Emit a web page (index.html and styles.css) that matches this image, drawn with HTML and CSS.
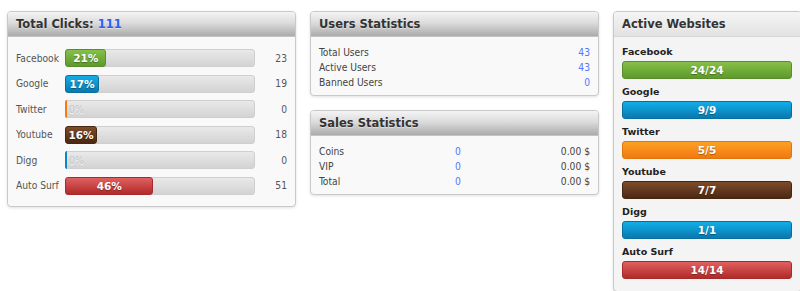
FILE: index.html
```html
<!DOCTYPE html>
<html lang="en">
<head>
    <meta charset="UTF-8">
    <title>Dashboard</title>
    <link rel="stylesheet" href="styles.css">
</head>
<body>
    <div class="dashboard">
        <div class="col col-clicks">
            <div class="box">
                <div class="box-head">Total Clicks: <span class="total">111</span></div>
                <div class="box-body clicks">
                    <div class="click-row">
                        <span class="name">Facebook</span>
                        <div class="track"><div class="fill green" style="width: 21%">21%</div></div>
                        <span class="count">23</span>
                    </div>
                    <div class="click-row">
                        <span class="name">Google</span>
                        <div class="track"><div class="fill blue" style="width: 17%">17%</div></div>
                        <span class="count">19</span>
                    </div>
                    <div class="click-row">
                        <span class="name">Twitter</span>
                        <div class="track"><div class="fill orange empty">0%</div></div>
                        <span class="count">0</span>
                    </div>
                    <div class="click-row">
                        <span class="name">Youtube</span>
                        <div class="track"><div class="fill brown" style="width: 16%">16%</div></div>
                        <span class="count">18</span>
                    </div>
                    <div class="click-row">
                        <span class="name">Digg</span>
                        <div class="track"><div class="fill blue empty">0%</div></div>
                        <span class="count">0</span>
                    </div>
                    <div class="click-row">
                        <span class="name">Auto Surf</span>
                        <div class="track"><div class="fill red" style="width: 46%">46%</div></div>
                        <span class="count">51</span>
                    </div>
                </div>
            </div>
        </div>

        <div class="col col-stats">
            <div class="box">
                <div class="box-head">Users Statistics</div>
                <div class="box-body stats">
                    <div class="stat-row"><span>Total Users</span><span class="val">43</span></div>
                    <div class="stat-row"><span>Active Users</span><span class="val">43</span></div>
                    <div class="stat-row"><span>Banned Users</span><span class="val">0</span></div>
                </div>
            </div>
            <div class="box">
                <div class="box-head">Sales Statistics</div>
                <div class="box-body stats">
                    <div class="sale-row"><span>Coins</span><span class="val">0</span><span class="money">0.00 $</span></div>
                    <div class="sale-row"><span>VIP</span><span class="val">0</span><span class="money">0.00 $</span></div>
                    <div class="sale-row"><span>Total</span><span class="val">0</span><span class="money">0.00 $</span></div>
                </div>
            </div>
        </div>

        <div class="col col-sites">
            <div class="box box-light">
                <div class="box-head">Active Websites</div>
                <div class="box-body sites">
                    <div class="site">
                        <div class="site-name">Facebook</div>
                        <div class="site-bar green">24/24</div>
                    </div>
                    <div class="site">
                        <div class="site-name">Google</div>
                        <div class="site-bar blue">9/9</div>
                    </div>
                    <div class="site">
                        <div class="site-name">Twitter</div>
                        <div class="site-bar orange">5/5</div>
                    </div>
                    <div class="site">
                        <div class="site-name">Youtube</div>
                        <div class="site-bar brown">7/7</div>
                    </div>
                    <div class="site">
                        <div class="site-name">Digg</div>
                        <div class="site-bar blue">1/1</div>
                    </div>
                    <div class="site">
                        <div class="site-name">Auto Surf</div>
                        <div class="site-bar red">14/14</div>
                    </div>
                </div>
            </div>
        </div>
    </div>
</body>
</html>
```

FILE: styles.css
```css
body {
    margin: 0;
    padding: 0;
    background: #ffffff;
    font-family: 'DejaVu Sans Condensed', 'DejaVu Sans', Verdana, sans-serif;
    font-size: 10.2px;
    color: #444;
    overflow: hidden;
}
.dashboard {
    display: flex;
    align-items: flex-start;
    gap: 14px;
    padding: 11px 0 0 7px;
    width: 820px;
}
.col {
    display: flex;
    flex-direction: column;
    gap: 14px;
    flex: none;
}
.col-clicks,
.col-stats {
    width: 289px;
}
.col-sites {
    width: 189px;
}
.box {
    background: #f9f9f9;
    border: 1px solid #c9c9c9;
    border-radius: 4px;
    box-shadow: 0 1px 3px rgba(0, 0, 0, 0.12);
    overflow: hidden;
}
.box-head {
    height: 24px;
    line-height: 24px;
    padding: 0 8px;
    font-family: 'DejaVu Sans', Verdana, sans-serif;
    font-size: 11.5px;
    font-weight: bold;
    color: #333;
    background: linear-gradient(to bottom, #f4f4f4 0%, #dcdcdc 45%, #ababab 100%);
    border-bottom: 1px solid #c4c4c4;
    text-shadow: 0 1px 0 rgba(255, 255, 255, 0.4);
}
.box-head .total {
    color: #2d5ff5;
}
.box-light {
    background: #f4f4f4;
}
.box-light .box-head {
    background: linear-gradient(to bottom, #f5f5f5 0%, #e2e2e2 100%);
    border-bottom: 1px solid #d6d6d6;
}

/* total clicks */
.clicks {
    padding: 12px 8px 11px 8px;
    display: flex;
    flex-direction: column;
    gap: 7.6px;
}
.click-row {
    display: flex;
    align-items: center;
    height: 18px;
}
.click-row .name {
    width: 49px;
    flex: none;
    color: #555;
}
.track {
    width: 188px;
    height: 16px;
    flex: none;
    border: 1px solid #cfcfcf;
    border-radius: 3px;
    background: linear-gradient(to bottom, #e9e9e9 0%, #d3d3d3 100%);
}
.fill {
    height: 16px;
    line-height: 16px;
    margin: -1px 0 0 -1px;
    border-radius: 3px;
    color: #fff;
    font-family: 'DejaVu Sans', Verdana, sans-serif;
    font-weight: bold;
    font-size: 10.5px;
    text-align: center;
    text-shadow: 0 1px 1px rgba(0, 0, 0, 0.35);
    white-space: nowrap;
}
.fill.empty {
    width: 0;
    height: 18px;
    line-height: 18px;
    border: none;
    border-left: 2px solid #f47c14;
    border-radius: 2px 0 0 2px;
    background: none;
    color: #c4c4c4;
    font-family: 'DejaVu Sans Condensed', 'DejaVu Sans', sans-serif;
    font-weight: normal;
    text-align: left;
    padding-left: 2px;
    text-shadow: 0 1px 0 #f4f4f4;
}
.fill.blue.empty {
    border-left-color: #0a88c4;
}
.click-row .count {
    flex: 1;
    text-align: right;
    color: #555;
}

/* statistics */
.stats {
    padding: 8px 8px 5px 8px;
    line-height: 15px;
}
.stat-row {
    display: flex;
    justify-content: space-between;
}
.sale-row {
    display: grid;
    grid-template-columns: 136px 1fr auto;
}
.val {
    color: #5577ff;
}

/* active websites */
.sites {
    padding: 8px 9px 6px 8px;
}
.site-name {
    font-family: 'DejaVu Sans', Verdana, sans-serif;
    font-size: 9.5px;
    font-weight: bold;
    color: #222;
    line-height: 14px;
    margin-bottom: 2px;
}
.site-bar {
    height: 16px;
    line-height: 16px;
    border-radius: 3px;
    text-align: center;
    color: #fff;
    font-family: 'DejaVu Sans', Verdana, sans-serif;
    font-weight: bold;
    font-size: 10.5px;
    text-shadow: 0 1px 1px rgba(0, 0, 0, 0.35);
    margin-bottom: 6px;
}

.green {
    background: linear-gradient(to bottom, #86c04a 0%, #5e9a2c 100%);
    border: 1px solid #5a8c2c;
}
.blue {
    background: linear-gradient(to bottom, #12aee8 0%, #0a78ae 100%);
    border: 1px solid #0a6fa0;
}
.orange {
    background: linear-gradient(to bottom, #fda124 0%, #f27812 100%);
    border: 1px solid #e0760e;
}
.brown {
    background: linear-gradient(to bottom, #7d4c2a 0%, #4b2814 100%);
    border: 1px solid #47270f;
}
.red {
    background: linear-gradient(to bottom, #e06060 0%, #b22a2a 100%);
    border: 1px solid #a82a2a;
}
```
